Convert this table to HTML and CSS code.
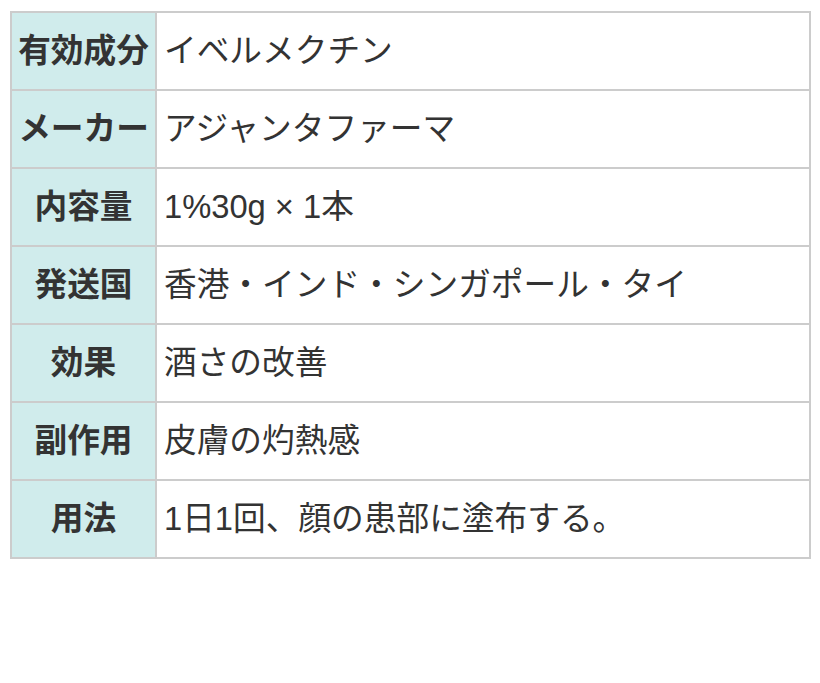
FILE: index.html
```html
<!DOCTYPE html>
<html lang="ja">
<head>
<meta charset="utf-8">
<link rel="stylesheet" href="styles.css">
</head>
<body>
<div class="wrap">
<table class="spec">
<tr><th>有効成分</th><td>イベルメクチン</td></tr>
<tr><th>メーカー</th><td>アジャンタファーマ</td></tr>
<tr><th>内容量</th><td>1%30g × 1本</td></tr>
<tr><th>発送国</th><td>香港・インド・シンガポール・タイ</td></tr>
<tr><th>効果</th><td>酒さの改善</td></tr>
<tr><th>副作用</th><td>皮膚の灼熱感</td></tr>
<tr><th>用法</th><td>1日1回、顔の患部に塗布する。</td></tr>
</table>
</div>
</body>
</html>
```
FILE: styles.css
```css
html, body {
  margin: 0;
  padding: 0;
  background: #fff;
}
.wrap {
  padding: 11px 9px 0 10px;
}
.spec {
  width: 801px;
  border-collapse: collapse;
  font-family: "Liberation Sans", "Noto Sans CJK JP", sans-serif;
  font-size: 32.7px;
  color: #333;
}
.spec th, .spec td {
  border: 2px solid #cccccc;
  height: 78px;
  padding: 0 7px;
  line-height: 1.4;
  box-sizing: border-box;
}
.spec th {
  width: 145px;
  padding: 0 4px;
  background: #d0ecec;
  font-weight: bold;
  text-align: center;
  white-space: nowrap;
}
.spec td {
  text-align: left;
  font-weight: normal;
}
```
